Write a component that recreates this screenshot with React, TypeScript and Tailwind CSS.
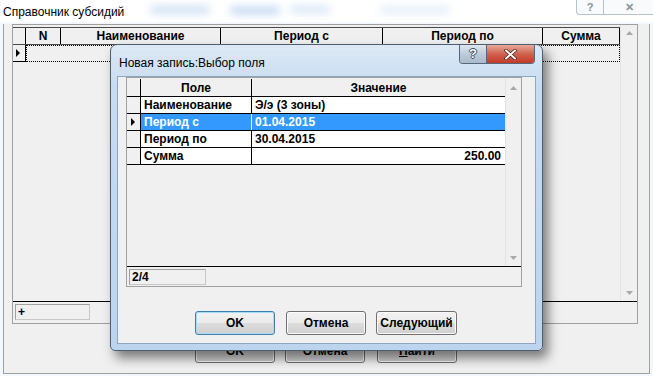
import React from "react";

const Tri = () => (
  <svg width="5" height="8" viewBox="0 0 5 8" className="block">
    <path d="M0 0 L4 4 L0 8 Z" fill="#000" />
  </svg>
);

const ScrollArrow = ({ down = false }: { down?: boolean }) => (
  <svg width="7" height="4" viewBox="0 0 7 4" className="block">
    <path d={down ? "M0 0 H7 L3.5 4 Z" : "M0 4 H7 L3.5 0 Z"} fill="#a8a8a8" />
  </svg>
);

const WinButton = ({
  label,
  width = "w-[80px]",
  primary = false,
}: {
  label: React.ReactNode;
  width?: string;
  primary?: boolean;
}) => (
  <div
    className={`${width} h-[24px] shrink-0 rounded-[3px] border ${
      primary ? "border-[#3c7fb1] shadow-[inset_0_0_0_1px_#a6dcf6]" : "border-[#707070] shadow-[inset_0_0_0_1px_#fcfcfc]"
    } bg-[linear-gradient(#f2f2f2_0%,#ebebeb_50%,#dddddd_50%,#cfcfcf_100%)] flex items-center justify-center text-[12px] font-bold`}
  >
    {label}
  </div>
);

const HeadCell = ({ w, children }: { w: string; children?: React.ReactNode }) => (
  <div className={`${w} h-full shrink-0 border-r border-black bg-[#f0f0f0] flex items-center justify-center text-[12px] font-bold`}>
    {children}
  </div>
);

const rows = [
  { f: "Наименование", v: "Э/э (3 зоны)" },
  { f: "Период с", v: "01.04.2015", sel: true },
  { f: "Период по", v: "30.04.2015" },
  { f: "Сумма", v: "250.00", right: true },
];

export default function App() {
  return (
    <div className="relative w-[653px] h-[376px] overflow-hidden bg-[#f4f8fc] font-['Liberation_Sans',Arial,sans-serif] text-black">
      {/* main title bar */}
      <div className="relative h-[22px] bg-white overflow-hidden">
        <div className="absolute left-[150px] top-[6px] w-[60px] h-[8px] rounded-full bg-[#b9d3f0] blur-[4px] opacity-70" />
        <div className="absolute left-[230px] top-[7px] w-[50px] h-[7px] rounded-full bg-[#9fc2ea] blur-[4px] opacity-70" />
        <div className="absolute left-[290px] top-[6px] w-[40px] h-[7px] rounded-full bg-[#b9d3f0] blur-[4px] opacity-60" />
        <div className="absolute left-[380px] top-[7px] w-[70px] h-[6px] rounded-full bg-[#c7dcf3] blur-[4px] opacity-60" />
        <span className="absolute left-[3px] top-[3px] text-[12px] text-black">
          Справочник субсидий
        </span>
        <div className="absolute left-[576px] top-0 h-[15px] w-[80px] flex border border-t-0 border-[#b8c2cc] rounded-b-[4px] bg-[#f8fafc]">
          <div className="w-[27px] h-full border-r border-[#b8c2cc] flex items-center justify-center text-[11px] font-bold text-[#8a949e]">?</div>
          <div className="flex-1 flex items-center justify-center text-[11px] font-bold text-[#8a949e]">✕</div>
        </div>
      </div>

      {/* main client */}
      <div className="ml-[3px] w-[647px] h-[350px] bg-[#f0f0f0] border-x border-b border-[#a0a0a0]">
        <div className="ml-[8px] mt-[2px] w-[626px] h-[300px] border border-[#a0a0a0] flex flex-col">
          <div className="h-[277px] flex border-b border-black">
            <div className="w-[607px] pt-[2px] flex flex-col">
              <div className="h-[18px] flex border-y border-black/70">
                <HeadCell w="w-[13px]" />
                <HeadCell w="w-[35px]">N</HeadCell>
                <HeadCell w="w-[160px]">Наименование</HeadCell>
                <HeadCell w="w-[162px]">Период с</HeadCell>
                <HeadCell w="w-[160px]">Период по</HeadCell>
                <HeadCell w="w-[77px]">Сумма</HeadCell>
              </div>
              <div className="h-[17px] flex">
                <div className="w-[13px] h-full border-r border-b border-black flex items-center pl-[3px]">
                  <Tri />
                </div>
                <div className="w-[594px] h-full border border-dotted border-black" />
              </div>
            </div>
            <div className="w-[17px] flex flex-col items-center justify-between py-[6px] border-l border-[#e3e3e3]">
              <ScrollArrow />
              <ScrollArrow down />
            </div>
          </div>
          <div className="flex-1 pt-[2px] pl-[2px]">
            <div className="w-[75px] h-[16px] border border-[#c8c8c8] border-t-[#a0a0a0] border-l-[#a0a0a0] text-[12px] font-bold leading-[14px] pl-[2px]">
              +
            </div>
          </div>
        </div>
        <div className="mt-[15px] ml-[191px] flex">
          <WinButton label="OK" />
          <div className="w-[10px]" />
          <WinButton label="Отмена" />
          <div className="w-[12px]" />
          <WinButton
            label={
              <span>
                <span className="underline">Н</span>айти
              </span>
            }
          />
        </div>
      </div>

      {/* dialog */}
      <div className="absolute left-[110px] top-[44px] w-[433px] h-[307px] rounded-t-[7px] rounded-b-[5px] border border-[#4c5e72] bg-[linear-gradient(#dde9f6,#c8dcf1_40px,#bcd4ee)] shadow-[5px_7px_12px_rgba(0,0,0,0.5)]">
        <div className="relative h-[31px]">
          <span className="absolute left-[8px] top-[9px] text-[12px]">
            Новая запись:Выбор поля
          </span>
          <div className="absolute left-[348px] top-0 h-[19px] flex rounded-b-[4px] border border-t-0 border-[#55677a] overflow-hidden">
            <div className="w-[27px] h-full border-r border-[#55677a] bg-[linear-gradient(#dfe7f0,#bccbdb_50%,#aabbcd)] flex items-center justify-center text-[13px] font-bold text-white [text-shadow:1px_0_#3a4a5c,-1px_0_#3a4a5c,0_1px_#3a4a5c,0_-1px_#3a4a5c]">
              ?
            </div>
            <div className="w-[47px] h-full bg-[linear-gradient(#e9a99b,#d0614f_50%,#c13b27)] flex items-center justify-center text-white">
              <svg width="13" height="11" viewBox="0 0 13 11">
                <path d="M2 1.5 L11 9.5 M11 1.5 L2 9.5" stroke="#4b2018" strokeWidth="3.4" strokeLinecap="round" />
                <path d="M2 1.5 L11 9.5 M11 1.5 L2 9.5" stroke="#fff" strokeWidth="2" strokeLinecap="round" />
              </svg>
            </div>
          </div>
        </div>
        <div className="ml-[6px] w-[419px] h-[268px] bg-[#f0f0f0] border border-[#8ea6bf]">
          <div className="ml-[8px] w-[396px] h-[210px] border border-[#a0a0a0] flex flex-col">
            <div className="h-[189px] flex border-b border-black">
              <div className="w-[378px] pt-[1px] flex flex-col">
                <div className="h-[18px] flex border-b border-black">
                  <HeadCell w="w-[14px]" />
                  <HeadCell w="w-[111px]">Поле</HeadCell>
                  <div className="w-[253px] h-full bg-[#f0f0f0] flex items-center justify-center text-[12px] font-bold">
                    Значение
                  </div>
                </div>
                {rows.map((r) => (
                  <div key={r.f} className="h-[17px] flex border-b border-black">
                    <div className="w-[14px] h-full shrink-0 border-r border-black bg-[#f0f0f0] flex items-center pl-[4px]">
                      {r.sel && <Tri />}
                    </div>
                    <div
                      className={`w-[111px] h-full shrink-0 border-r ${
                        r.sel ? "bg-[#3399ff] text-white border-white" : "bg-white border-black"
                      } text-[12px] font-bold leading-[16px] pl-[3px]`}
                    >
                      {r.f}
                    </div>
                    <div
                      className={`flex-1 h-full ${r.sel ? "bg-[#3399ff] text-white" : "bg-white"} text-[12px] font-bold leading-[16px] ${
                        r.right ? "text-right pr-[4px]" : "pl-[3px]"
                      }`}
                    >
                      {r.v}
                    </div>
                  </div>
                ))}
              </div>
              <div className="w-[16px] flex flex-col items-center justify-between pt-[8px] pb-[6px] border-l border-[#e3e3e3]">
                <ScrollArrow />
                <ScrollArrow down />
              </div>
            </div>
            <div className="flex-1 pt-[2px] pl-[2px]">
              <div className="w-[77px] h-[16px] border border-[#c8c8c8] border-t-[#a0a0a0] border-l-[#a0a0a0] text-[12px] font-bold leading-[14px] pl-[2px]">
                2/4
              </div>
            </div>
          </div>
          <div className="mt-[24px] ml-[77px] flex">
            <WinButton label="OK" primary />
            <div className="w-[11px]" />
            <WinButton label="Отмена" />
            <div className="w-[10px]" />
            <WinButton label="Следующий" width="w-[81px]" />
          </div>
        </div>
      </div>
    </div>
  );
}
